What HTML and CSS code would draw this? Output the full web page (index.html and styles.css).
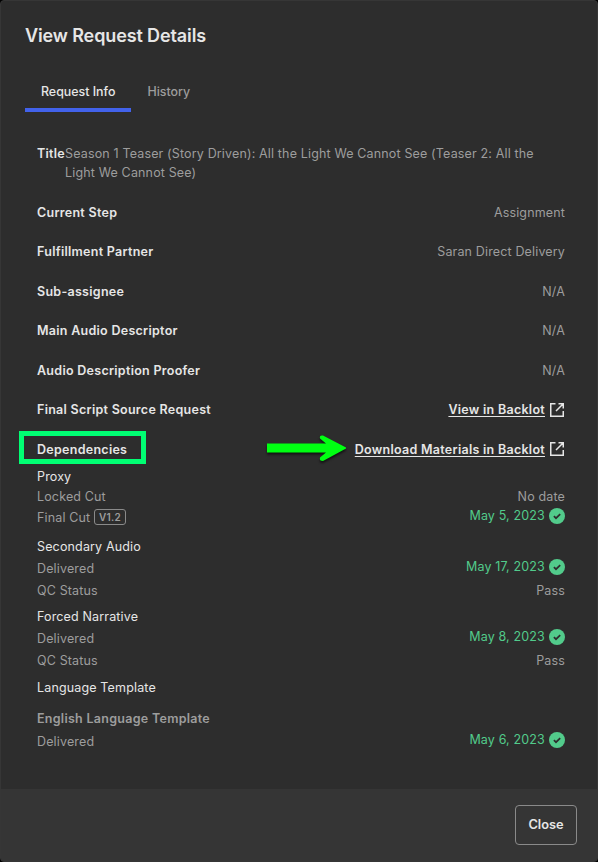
FILE: index.html
```html
<!DOCTYPE html>
<html lang="en">
<head>
    <meta charset="UTF-8">
    <meta name="viewport" content="width=device-width, initial-scale=1.0">
    <title>View Request Details</title>
    <link rel="stylesheet" href="styles.css">
</head>
<body>
    <!-- Shared icons -->
    <svg class="icon-defs" width="0" height="0">
        <symbol id="icon-external" viewBox="0 0 16 16">
            <path d="M6.5 1.75H1.75v12.5h12.5V9M9.5 1.75h4.75V6.5M14 2L7 9" fill="none" stroke="currentColor" stroke-width="1.5"/>
        </symbol>
        <symbol id="icon-check" viewBox="0 0 16 16">
            <circle cx="8" cy="8" r="8" fill="currentColor"/>
            <path d="M4.9 8.1l2.1 2.1 4.2-4.1" fill="none" stroke="#2d2d2d" stroke-width="1.7"/>
        </symbol>
    </svg>

    <div class="modal">
        <div class="modal-body">
            <h2 class="modal-title">View Request Details</h2>

            <div class="tabs">
                <button class="tab active">Request Info</button>
                <button class="tab">History</button>
            </div>

            <div class="details">
                <div class="title-row">
                    <span class="label">Title</span>
                    <span class="value">Season 1 Teaser (Story Driven): All the Light We Cannot See (Teaser 2: All the Light We Cannot See)</span>
                </div>
                <div class="row">
                    <span class="label">Current Step</span>
                    <span class="value">Assignment</span>
                </div>
                <div class="row">
                    <span class="label">Fulfillment Partner</span>
                    <span class="value">Saran Direct Delivery</span>
                </div>
                <div class="row">
                    <span class="label">Sub-assignee</span>
                    <span class="value">N/A</span>
                </div>
                <div class="row">
                    <span class="label">Main Audio Descriptor</span>
                    <span class="value">N/A</span>
                </div>
                <div class="row">
                    <span class="label">Audio Description Proofer</span>
                    <span class="value">N/A</span>
                </div>
                <div class="row">
                    <span class="label">Final Script Source Request</span>
                    <a class="link" href="#"><span>View in Backlot</span><svg class="icon"><use href="#icon-external"/></svg></a>
                </div>
                <div class="row dependencies">
                    <span class="label">Dependencies<span class="highlight"></span></span>
                    <a class="link" href="#">
                        <svg class="arrow" viewBox="0 0 88 34">
                            <path d="M3 12.5H62L56 7.5Q55 4 59 4.5L82 16.5V17.5L59 30Q55 30 56 26.5L62 21.5H3Z"/>
                        </svg>
                        <span>Download Materials in Backlot</span><svg class="icon"><use href="#icon-external"/></svg>
                    </a>
                </div>

                <div class="group proxy">
                    <h4>Proxy</h4>
                    <div class="item">
                        <span>Locked Cut</span>
                        <span>No date</span>
                    </div>
                    <div class="item">
                        <span>Final Cut <span class="version">V1.2</span></span>
                        <span class="done">May 5, 2023<svg class="icon"><use href="#icon-check"/></svg></span>
                    </div>
                </div>

                <div class="group">
                    <h4>Secondary Audio</h4>
                    <div class="item">
                        <span>Delivered</span>
                        <span class="done">May 17, 2023<svg class="icon"><use href="#icon-check"/></svg></span>
                    </div>
                    <div class="item">
                        <span>QC Status</span>
                        <span>Pass</span>
                    </div>
                </div>

                <div class="group">
                    <h4>Forced Narrative</h4>
                    <div class="item">
                        <span>Delivered</span>
                        <span class="done">May 8, 2023<svg class="icon"><use href="#icon-check"/></svg></span>
                    </div>
                    <div class="item">
                        <span>QC Status</span>
                        <span>Pass</span>
                    </div>
                </div>

                <div class="group">
                    <h4>Language Template</h4>
                    <h5>English Language Template</h5>
                    <div class="item">
                        <span>Delivered</span>
                        <span class="done">May 6, 2023<svg class="icon"><use href="#icon-check"/></svg></span>
                    </div>
                </div>
            </div>
        </div>

        <div class="modal-footer">
            <button class="close-btn">Close</button>
        </div>
    </div>
</body>
</html>
```

FILE: styles.css
```css
:root {
    --background: #2d2d2d;
    --footer: #353535;
    --text: #e6e6e6;
    --muted: #9d9d9d;
    --primary: #4262eb;
    --success: #52cb8b;
}

* {
    box-sizing: border-box;
}

body {
    margin: 0;
    background: #000;
    color: var(--text);
    font-family: Inter, "Liberation Sans", sans-serif;
    font-size: 12.5px;
    line-height: 19px;
}

.icon-defs {
    position: absolute;
}

.modal {
    display: flex;
    flex-direction: column;
    height: 862px;
    border: 1px solid #363636;
    border-radius: 4px;
    background: var(--background);
    overflow: hidden;
}

.modal-body {
    flex: 1;
    padding: 22px 32px 0 24px;
}

.modal-title {
    margin: 0;
    font-size: 18px;
    font-weight: 600;
    letter-spacing: -0.12px;
    line-height: 26px;
}

/* Tabs */
.tabs {
    display: flex;
    margin-top: 24px;
}

.tab {
    height: 39px;
    padding: 1px 16px 0;
    border: none;
    border-bottom: 4px solid transparent;
    background: none;
    color: var(--muted);
    font: 500 12.4px/19px Inter, "Liberation Sans", sans-serif;
}

.tab.active {
    border-bottom-color: var(--primary);
    color: var(--text);
}

/* Request details */
.details {
    padding: 32px 0 0 12px;
    letter-spacing: 0.15px;
}

.label {
    font-weight: 600;
    letter-spacing: 0.28px;
}

.value {
    color: var(--muted);
}

.title-row {
    display: flex;
    margin-bottom: 20.5px;
}

.row {
    display: flex;
    justify-content: space-between;
    height: 19px;
    margin-bottom: 20.5px;
}

.link {
    position: relative;
    display: flex;
    align-items: center;
    gap: 4px;
    color: var(--text);
    font-weight: 600;
    letter-spacing: 0.28px;
    text-decoration: none;
}

.link span {
    text-decoration: underline;
    text-underline-offset: 2px;
}

.icon {
    flex: none;
    width: 16px;
    height: 16px;
}

.dependencies {
    margin-bottom: 8px;
}

.dependencies .label {
    position: relative;
}

.highlight {
    position: absolute;
    top: -9px;
    left: -18px;
    width: 127px;
    height: 33px;
    border: 5px solid #00ff73;
}

.arrow {
    position: absolute;
    right: 100%;
    top: -9px;
    width: 88px;
    height: 34px;
    margin-right: 3px;
    fill: #00ff12;
    filter: drop-shadow(0 2px 1px rgba(0, 0, 0, 0.6));
}

/* Dependency groups */
.group {
    margin-bottom: 6px;
}

.group h4,
.group h5 {
    margin: 0 0 1px;
    font-size: 12.5px;
    font-weight: 400;
    line-height: 20px;
}

.group h5 {
    margin: 11px 0 1.5px;
    color: var(--muted);
    font-weight: 600;
    letter-spacing: 0.28px;
}

.item {
    display: flex;
    justify-content: space-between;
    height: 21.5px;
    color: var(--muted);
    line-height: 21.5px;
}

.group:last-child {
    margin-top: 7px;
}

.proxy {
    margin-bottom: 9px;
}

.proxy h4 {
    margin-bottom: 0;
}

.proxy .item:nth-child(2) {
    height: 20px;
    line-height: 20px;
}

.version {
    display: inline-block;
    height: 16px;
    padding: 0 4px;
    border: 1px solid #8a8a8a;
    border-radius: 3px;
    font-size: 10px;
    font-weight: 600;
    letter-spacing: 0.3px;
    line-height: 14px;
    vertical-align: 1px;
}

.done {
    display: flex;
    align-items: center;
    gap: 4px;
    height: 18px;
    color: var(--success);
}

.modal-footer {
    display: flex;
    justify-content: flex-end;
    height: 72px;
    padding: 16px 20px 0 0;
    background: var(--footer);
}

.close-btn {
    width: 62px;
    height: 40px;
    padding: 0 0 1px;
    border: 1px solid #8a8a8a;
    border-radius: 4px;
    background: none;
    color: var(--text);
    font: 600 12.8px/19px Inter, "Liberation Sans", sans-serif;
}
```
